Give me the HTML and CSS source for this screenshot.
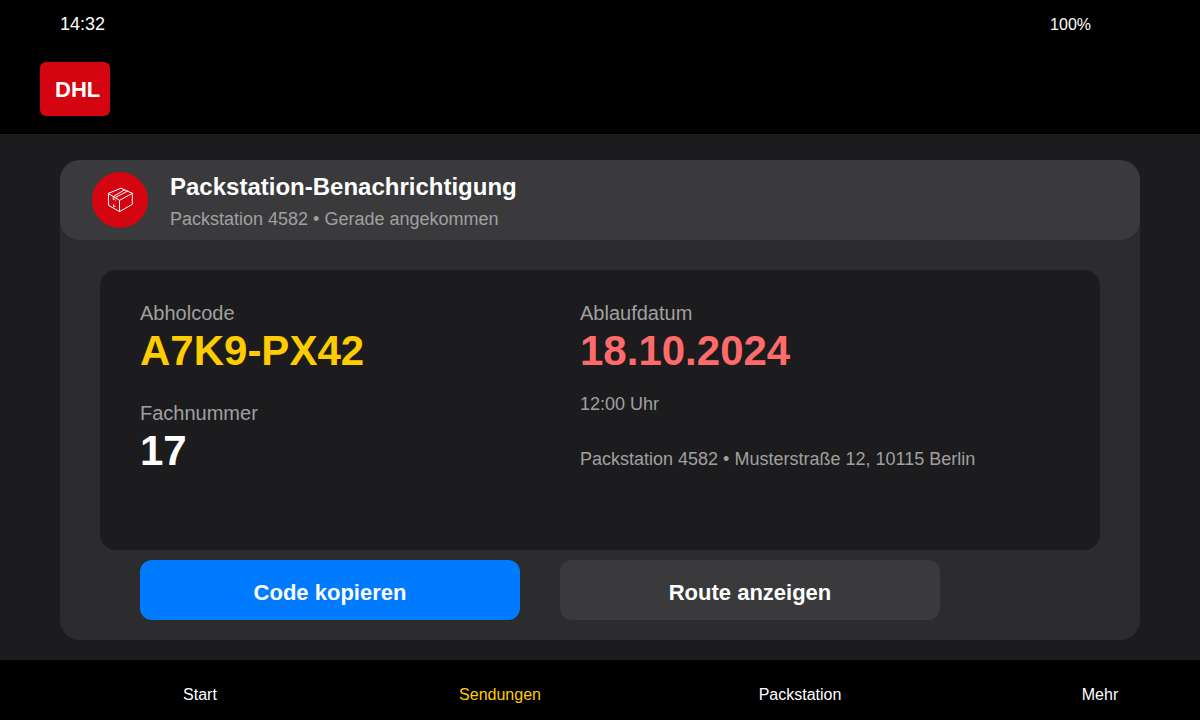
FILE: index.html
```html
<!DOCTYPE html>
<html lang="de">
<head>
  <meta charset="UTF-8" />
  <meta name="viewport" content="width=device-width, initial-scale=1.0"/>
  <title>Packstation-Benachrichtigung</title>
  <link rel="stylesheet" href="styles.css">
</head>
<body>

  <header class="top-bar">
    <div class="status">
      <span class="status-time">14:32</span>
      <span class="status-battery">100%</span>
    </div>
    <div class="logo">DHL</div>
  </header>

  <main class="content">
    <section class="card">

      <div class="card-header">
        <div class="card-icon">
          <svg width="28" height="28" viewBox="0 0 28 28" fill="none" stroke="#fff" stroke-width="1" stroke-linejoin="round" stroke-linecap="round">
            <path d="M15.3 2.4 L26.3 7.3 V18.3 L13.5 25.6 L2.5 19.3 V7.7 Z" />
            <path d="M2.5 7.7 L13.5 14.3 L26.3 7.3 M13.5 14.3 V25.6" />
            <path d="M7.4 10.6 L18.4 3.9 M10 11.2 L21.4 5.2" />
            <path d="M7.2 11 V13.6 L8.4 13 L9.6 14.2" stroke-width="0.8" />
            <path d="M7.6 18.6 V20.4 H9" stroke-width="0.9" />
          </svg>
        </div>
        <div class="card-heading">
          <h1>Packstation-Benachrichtigung</h1>
          <p>Packstation 4582 • Gerade angekommen</p>
        </div>
      </div>

      <div class="details">
        <div class="details-column">
          <h2>Abholcode</h2>
          <p class="value value--code">A7K9-PX42</p>
          <h2 class="compartment">Fachnummer</h2>
          <p class="value">17</p>
        </div>
        <div class="details-column">
          <h2>Ablaufdatum</h2>
          <p class="value value--date">18.10.2024</p>
          <p class="time">12:00 Uhr</p>
          <p class="address">Packstation 4582 • Musterstraße 12, 10115 Berlin</p>
        </div>
      </div>

      <div class="actions">
        <button class="button button--primary" type="button">Code kopieren</button>
        <button class="button" type="button">Route anzeigen</button>
      </div>

    </section>
  </main>

  <nav class="tabs">
    <a href="#start">Start</a>
    <a class="active" href="#sendungen">Sendungen</a>
    <a href="#packstation">Packstation</a>
    <a href="#mehr">Mehr</a>
  </nav>

</body>
</html>
```
FILE: styles.css
```css
* {
  box-sizing: border-box;
}

body {
  min-height: 100vh;
  margin: 0;
  font-family: "Liberation Sans", Arial, sans-serif;
  background-color: #1c1c1e;
  color: #fff;
  display: flex;
  flex-direction: column;
}

h1, h2, p {
  margin: 0;
}

.top-bar {
  background-color: #000;
  padding: 14px 0 18px;
}

.status {
  display: flex;
  justify-content: space-between;
  align-items: baseline;
  height: 20px;
  padding: 0 109px 0 60px;
  margin-bottom: 28px;
  line-height: 20px;
}

.status-time {
  font-size: 18px;
}

.status-battery {
  font-size: 16px;
}

.logo {
  width: fit-content;
  margin-left: 40px;
  padding: 15px 10px 13px 15px;
  border-radius: 6px;
  background-color: #d40511;
  font-size: 22px;
  font-weight: bold;
  line-height: 26px;
}

.content {
  flex: 1;
  display: flex;
  flex-direction: column;
  padding: 26px 60px 20px;
}

.card {
  flex: 1;
  display: flex;
  flex-direction: column;
  border-radius: 20px;
  background-color: #2c2c2e;
}

.card-header {
  display: flex;
  align-items: center;
  gap: 22px;
  padding: 5px 32px;
  border-radius: 20px;
  background-color: #3a3a3c;
}

.card-icon {
  width: 56px;
  height: 56px;
  border-radius: 50%;
  background-color: #d40511;
  display: flex;
  align-items: center;
  justify-content: center;
}

.card-heading {
  padding-top: 6px;
  line-height: 32px;
}

h1 {
  font-size: 24px;
}

.card-heading p {
  font-size: 18px;
  color: #a0a0a0;
}

.details {
  flex: 1;
  display: grid;
  grid-template-columns: 1fr 1fr;
  margin: 30px 40px 0;
  padding: 31px 80px 31px 40px;
  border-radius: 16px;
  background-color: #1c1c1e;
}

h2 {
  font-size: 20px;
  font-weight: normal;
  line-height: 24px;
  color: #a0a0a0;
}

.value {
  font-size: 42px;
  font-weight: bold;
  line-height: 52px;
}

.value--code {
  color: #ffcc00;
}

.value--date {
  color: #ff6b6b;
}

.compartment {
  margin-top: 24px;
}

.time,
.address {
  font-size: 18px;
  line-height: 24px;
  color: #a0a0a0;
}

.time {
  margin-top: 15px;
}

.address {
  margin-top: 31px;
}

.actions {
  display: grid;
  grid-template-columns: 1fr 1fr;
  gap: 40px;
  padding: 10px 200px 20px 80px;
}

.button {
  padding: 20px 16px 14px;
  border: none;
  border-radius: 12px;
  background-color: #3a3a3c;
  color: #fff;
  font-family: inherit;
  font-size: 22px;
  font-weight: bold;
  line-height: 26px;
  cursor: pointer;
}

.button--primary {
  background-color: #007aff;
}

.tabs {
  display: grid;
  grid-template-columns: repeat(4, 1fr);
  gap: 100px;
  padding: 25px 0 15px 100px;
  background-color: #000;
}

.tabs a {
  color: #fff;
  font-size: 16px;
  line-height: 20px;
  text-align: center;
  text-decoration: none;
}

.tabs .active {
  color: #ffcc00;
}
```
